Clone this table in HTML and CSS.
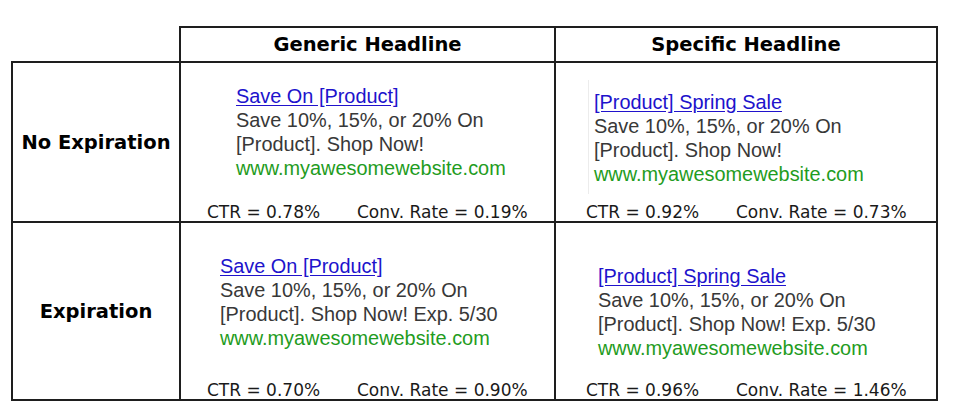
FILE: index.html
```html
<!DOCTYPE html>
<html lang="en">
<head>
<meta charset="utf-8">
<title>Headline test results</title>
<link rel="stylesheet" href="styles.css">
</head>
<body>
<div class="grid">
  <div class="cell corner"></div>
  <div class="cell head">Generic Headline</div>
  <div class="cell head">Specific Headline</div>

  <div class="cell label">No Expiration</div>
  <div class="cell body r1c2">
    <div class="ad">
      <a class="ad-title" href="#">Save On [Product]</a>
      <div class="ad-desc">Save 10%, 15%, or 20% On</div>
      <div class="ad-desc">[Product]. Shop Now!</div>
      <div class="ad-url">www.myawesomewebsite.com</div>
    </div>
    <div class="stats"><span class="ctr">CTR = 0.78%</span><span>Conv. Rate = 0.19%</span></div>
  </div>
  <div class="cell body r1c3">
    <div class="ad boxed">
      <a class="ad-title" href="#">[Product] Spring Sale</a>
      <div class="ad-desc">Save 10%, 15%, or 20% On</div>
      <div class="ad-desc">[Product]. Shop Now!</div>
      <div class="ad-url">www.myawesomewebsite.com</div>
    </div>
    <div class="stats"><span class="ctr">CTR = 0.92%</span><span>Conv. Rate = 0.73%</span></div>
  </div>

  <div class="cell label">Expiration</div>
  <div class="cell body r2c2">
    <div class="ad">
      <a class="ad-title" href="#">Save On [Product]</a>
      <div class="ad-desc">Save 10%, 15%, or 20% On</div>
      <div class="ad-desc">[Product]. Shop Now! Exp. 5/30</div>
      <div class="ad-url">www.myawesomewebsite.com</div>
    </div>
    <div class="stats"><span class="ctr">CTR = 0.70%</span><span>Conv. Rate = 0.90%</span></div>
  </div>
  <div class="cell body r2c3">
    <div class="ad">
      <a class="ad-title" href="#">[Product] Spring Sale</a>
      <div class="ad-desc">Save 10%, 15%, or 20% On</div>
      <div class="ad-desc">[Product]. Shop Now! Exp. 5/30</div>
      <div class="ad-url">www.myawesomewebsite.com</div>
    </div>
    <div class="stats"><span class="ctr">CTR = 0.96%</span><span>Conv. Rate = 1.46%</span></div>
  </div>
</div>
</body>
</html>
```

FILE: styles.css
```css
html, body {
  margin: 0;
  padding: 0;
  background: #ffffff;
}

body {
  padding: 26px 0 0 11px;
}

.grid {
  display: grid;
  grid-template-columns: 170px 375px 382px;
  grid-template-rows: 37px 160px 178px;
  width: 927px;
}

.cell {
  box-sizing: border-box;
  border-right: 2px solid #1e1e1e;
  border-bottom: 2px solid #1e1e1e;
}

.head {
  border-top: 2px solid #1e1e1e;
  display: flex;
  align-items: center;
  justify-content: center;
  font-family: "DejaVu Sans", Verdana, sans-serif;
  font-weight: bold;
  font-size: 19.5px;
  color: #000;
}

.label {
  border-left: 2px solid #1e1e1e;
  display: flex;
  align-items: center;
  justify-content: center;
  font-family: "DejaVu Sans", Verdana, sans-serif;
  font-weight: bold;
  font-size: 19.5px;
  color: #000;
}

.body {
  display: flex;
  flex-direction: column;
}

.ad {
  font-family: "Liberation Sans", Arial, sans-serif;
  font-size: 19.9px;
  line-height: 24px;
  color: #383838;
}

.ad-title {
  display: block;
  color: #2012cc;
  text-decoration: underline;
  text-underline-offset: 2px;
  width: max-content;
}

.ad-url {
  color: #1f9c22;
}

.r1c2 .ad { padding: 21px 0 0 55px; }
.r2c2 .ad { padding: 31px 0 0 39px; }
.r1c3 .ad.boxed {
  margin: 17px 0 0 32px;
  padding: 10px 0 8px 5px;
  border-left: 1px solid #ececec;
  align-self: flex-start;
}
.r2c3 .ad { padding: 41px 0 0 42px; }

.stats {
  margin-top: auto;
  font-family: "DejaVu Sans", Verdana, sans-serif;
  font-size: 17px;
  line-height: 18px;
  color: #1a1a1a;
  white-space: nowrap;
}

.r1c2 .stats, .r2c2 .stats { padding-left: 26px; }
.r1c3 .stats, .r2c3 .stats { padding-left: 30px; }

.ctr {
  display: inline-block;
  width: 150px;
}
```
